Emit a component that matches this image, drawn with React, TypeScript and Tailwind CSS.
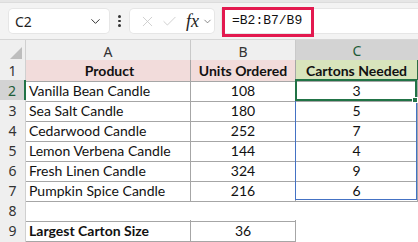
import { Check, ChevronDown, X } from "lucide-react";
import clsx from "clsx";

const grid = "grid grid-cols-[26px_165px_105px_122px]";
const line = "border-[#a6a6a6]";

type Row = {
  n: number;
  a?: string;
  b?: string;
  c?: string;
  head?: boolean;
  boldA?: boolean;
  boxAB?: boolean;
  boxC?: boolean;
  bottomOnly?: boolean;
};

const rows: Row[] = [
  { n: 1, a: "Product", b: "Units Ordered", c: "Cartons Needed", head: true, boxAB: true },
  { n: 2, a: "Vanilla Bean Candle", b: "108", c: "3", boxAB: true, boxC: true },
  { n: 3, a: "Sea Salt Candle", b: "180", c: "5", boxAB: true, boxC: true },
  { n: 4, a: "Cedarwood Candle", b: "252", c: "7", boxAB: true, boxC: true },
  { n: 5, a: "Lemon Verbena Candle", b: "144", c: "4", boxAB: true, boxC: true },
  { n: 6, a: "Fresh Linen Candle", b: "324", c: "9", boxAB: true, boxC: true },
  { n: 7, a: "Pumpkin Spice Candle", b: "216", c: "6", boxAB: true, boxC: true },
  { n: 8, bottomOnly: true },
  { n: 9, a: "Largest Carton Size", b: "36", boldA: true, boxAB: true },
];

const FormulaBar = () => (
  <div className="relative flex h-[37px] items-start bg-[#f3f3f3] pt-[6px] border-b border-[#d6d6d6]">
    <div className="ml-[9px] flex h-[24px] w-[100px] items-center justify-between rounded-[4px] bg-white pl-[6px] pr-[6px] shadow-[0_0_0_1px_#e6e6e6]">
      <span className="font-['Noto_Sans'] text-[14px] text-[#1f1f1f]">C2</span>
      <ChevronDown size={15} strokeWidth={1.6} className="text-[#333]" />
    </div>
    <div className="flex h-[24px] w-[21px] flex-col items-center justify-center gap-[2px]">
      <span className="size-[2.5px] rounded-full bg-[#333]" />
      <span className="size-[2.5px] rounded-full bg-[#333]" />
      <span className="size-[2.5px] rounded-full bg-[#333]" />
    </div>
    <div className="flex h-[24px] w-[84px] items-center rounded-[4px] bg-white pl-[9px] shadow-[0_0_0_1px_#e6e6e6]">
      <X size={17} strokeWidth={1.1} className="text-[#c4c4c4]" />
      <Check size={17} strokeWidth={1.1} className="ml-[5px] text-[#c4c4c4]" />
      <span className="ml-[8px] font-['Liberation_Serif'] text-[18px] italic leading-none text-[#222]">
        fx
      </span>
      <ChevronDown size={11} strokeWidth={1.5} className="ml-[3px] text-[#555]" />
    </div>
    <div className="ml-[8px] flex h-[24px] flex-1 items-center bg-white pl-[10px] shadow-[0_0_0_1px_#e6e6e6]">
      <span className="font-['Liberation_Mono'] text-[13px] text-[#111]">=B2:B7/B9</span>
    </div>
    <div className="absolute left-[222px] top-[4px] h-[30px] w-[92px] border-[3px] border-[#e3194f]" />
  </div>
);

const ColumnHeaders = () => (
  <div className={clsx(grid, "h-[20px] bg-[#efefef] font-['Noto_Sans'] text-[14px] text-[#333]")}>
    <div className="relative border-r border-b border-[#d0d0d0]">
      <svg className="absolute right-[3px] bottom-[3px]" width="12" height="12" viewBox="0 0 12 12">
        <polygon points="12,0 12,12 0,12" fill="#bdbdbd" />
      </svg>
    </div>
    <div className="flex items-center justify-center border-r border-b border-[#c9c9c9]">A</div>
    <div className="flex items-center justify-center border-r border-b border-[#c9c9c9]">B</div>
    <div className="flex items-center justify-center border-b-2 border-[#217346] bg-[#d3d3d3] text-[#1d5c38]">
      C
    </div>
  </div>
);

const SheetRow = ({ r }: { r: Row }) => {
  const sel = r.n === 2;
  return (
    <div className={clsx(grid, "h-[20px] font-['Lato'] text-[14px] text-[#111]")}>
      <div
        className={clsx(
          "flex items-center justify-center border-b font-['Noto_Sans'] text-[14px]",
          sel
            ? "border-r-2 border-r-[#217346] border-b-[#c9c9c9] bg-[#d3d3d3] text-[#1d5c38]"
            : "border-r border-[#d0d0d0] bg-[#efefef] text-[#333]"
        )}
      >
        {r.n}
      </div>
      <div
        className={clsx(
          "flex items-center pl-[3px]",
          r.boxAB && clsx("border-r border-b", line),
          r.bottomOnly && clsx("border-b", line),
          (r.head || r.boldA) && "font-bold",
          r.head && "justify-center bg-[#f2dcdb]"
        )}
      >
        {r.a}
      </div>
      <div
        className={clsx(
          "flex items-center justify-center",
          r.boxAB && clsx("border-r border-b", line),
          r.bottomOnly && clsx("border-b", line),
          r.head && "bg-[#f2dcdb] font-bold"
        )}
      >
        {r.b}
      </div>
      <div
        className={clsx(
          "flex items-center justify-center",
          r.boxC && clsx("border-r border-b", line),
          r.head && "border-r border-b border-r-[#2f6b44] border-b-[#a6a6a6] bg-[#d8e4bc] font-bold"
        )}
      >
        {r.c}
      </div>
    </div>
  );
};

export default function App() {
  return (
    <div className="h-[242px] w-[418px] overflow-hidden bg-white">
      <div className="h-[3px] border-b border-[#dcdcdc] bg-[#e6e6e6]" />
      <FormulaBar />
      <ColumnHeaders />
      <div className="relative">
        {rows.map((r) => (
          <SheetRow key={r.n} r={r} />
        ))}
        <div className={clsx(grid, "h-[20px]")}>
          <div className="border-r border-[#d0d0d0] bg-[#efefef]" />
        </div>
        <div className="absolute left-[295px] top-[19px] h-[121px] w-[122px] border border-[#4472c4]" />
        <div className="absolute left-[295px] top-[19px] h-[22px] w-[122px] border-2 border-[#217346]" />
        <div className="absolute left-[412px] top-[37px] size-[6px] border border-white bg-[#217346]" />
      </div>
    </div>
  );
}
